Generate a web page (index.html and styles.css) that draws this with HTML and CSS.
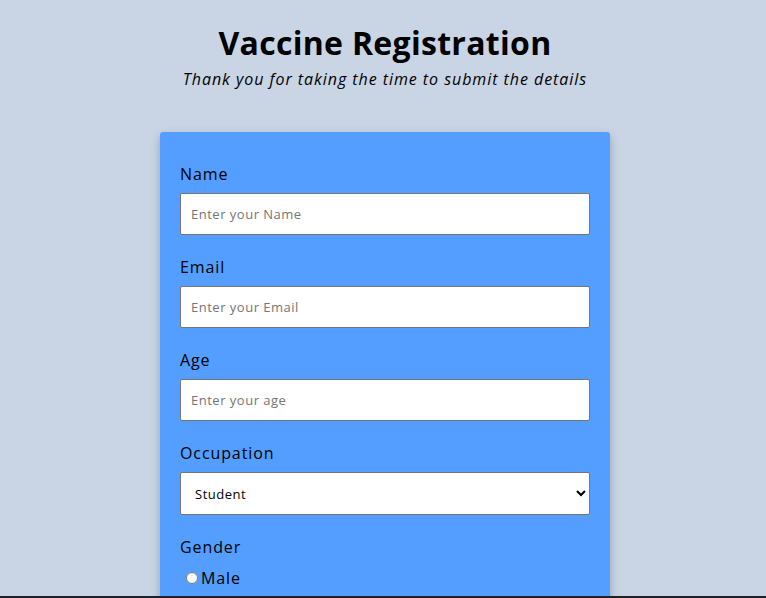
FILE: index.html
```html
<!DOCTYPE html>
<html lang="en">
<head>
<meta charset="utf-8">
<title>Vaccine Registration</title>
<link rel="stylesheet" href="styles.css">
</head>
<body>
<header class="header">
  <h1 class="title">Vaccine Registration</h1>
  <p class="subtitle">Thank you for taking the time to submit the details</p>
</header>
<form class="card">
  <div class="field">
    <label class="label" for="name">Name</label>
    <input class="input" id="name" type="text" placeholder="Enter your Name">
  </div>
  <div class="field">
    <label class="label" for="email">Email</label>
    <input class="input" id="email" type="email" placeholder="Enter your Email">
  </div>
  <div class="field">
    <label class="label" for="age">Age</label>
    <input class="input" id="age" type="text" placeholder="Enter your age">
  </div>
  <div class="field">
    <label class="label" for="occ">Occupation</label>
    <select class="select" id="occ">
      <option>Student</option>
      <option>Employee</option>
      <option>Other</option>
    </select>
  </div>
  <div class="field">
    <span class="label">Gender</span>
    <label class="radio-row"><input class="radio" type="radio" name="g">Male</label>
  </div>
</form>
<div class="bottom-bar"></div>
</body>
</html>
```
FILE: styles.css
```css
* { box-sizing: border-box; }
html, body { height: 100%; }
body {
  margin: 0;
  padding-left: 4px;
  background: #c9d5e5;
  font-family: "Open Sans", "DejaVu Sans", sans-serif;
  color: #000;
  overflow: hidden;
}
.header {
  display: flex;
  flex-direction: column;
  align-items: center;
  padding-top: 19px;
}
.title {
  margin: 0;
  font-size: 32px;
  line-height: 48px;
  font-weight: 700;
  letter-spacing: 0.3px;
}
.subtitle {
  margin: 0;
  font-size: 16px;
  line-height: 24px;
  font-style: italic;
  letter-spacing: 0.95px;
}
.card {
  width: 450px;
  margin: 41px auto 0;
  background: #539efe;
  border-radius: 3px;
  box-shadow: 0 4px 10px rgba(0,0,0,0.25);
  padding: 30px 20px 20px;
  display: flex;
  flex-direction: column;
  gap: 20px;
}
.field {
  display: flex;
  flex-direction: column;
  gap: 7px;
}
.label {
  font-size: 16px;
  line-height: 24px;
  letter-spacing: 0.9px;
}
.input, .select {
  width: 410px;
  height: 42px;
  border: 1px solid #767676;
  border-radius: 2px;
  background: #fff;
  padding: 0 10px;
  font-family: inherit;
  font-size: 13px;
  letter-spacing: 0.5px;
  color: #000;
}
.input::placeholder { color: #757575; }
.select {
  height: 43px;
  padding: 0 10px;
  color: #000;
}
.radio-row {
  display: flex;
  align-items: center;
  font-size: 16px;
  line-height: 20px;
  letter-spacing: 0.9px;
  margin-top: 2px;
}
.radio {
  margin: 0 3px 0 6px;
  width: 12px;
  height: 12px;
}
.bottom-bar {
  position: fixed;
  left: 0;
  right: 0;
  bottom: 0;
  height: 2px;
  background: #202124;
}
```
